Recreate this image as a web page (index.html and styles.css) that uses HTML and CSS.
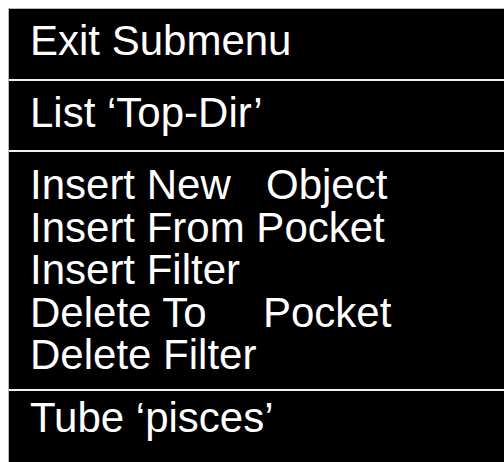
FILE: index.html
```html
<!DOCTYPE html>
<html lang="en">
<head>
<meta charset="utf-8">
<title>Submenu</title>
<link rel="stylesheet" href="styles.css">
</head>
<body>
  <div class="menu">
    <div class="group group-exit">
      <div class="item">Exit Submenu</div>
    </div>
    <div class="group group-list">
      <div class="item">List ‘Top-Dir’</div>
    </div>
    <div class="group group-edit">
      <div class="item"><span class="lead lead-new">Insert New</span>Object</div>
      <div class="item">Insert From Pocket</div>
      <div class="item">Insert Filter</div>
      <div class="item"><span class="lead lead-delete">Delete To</span>Pocket</div>
      <div class="item">Delete Filter</div>
    </div>
    <div class="group group-tube">
      <div class="item">Tube ‘pisces’</div>
    </div>
  </div>
</body>
</html>
```

FILE: styles.css
```css
html, body {
  margin: 0;
  padding: 0;
  background: #ffffff;
  height: 100%;
  overflow: hidden;
}

body {
  padding: 8px 0 0 8px;
  box-sizing: border-box;
}

.menu {
  height: 100%;
  background: #000000;
  border-left: 1px solid #b8b8b8;
  border-top: 1px solid #b8b8b8;
  color: #ffffff;
  font-family: "Liberation Sans", Arial, Helvetica, sans-serif;
  font-size: 42px;
  line-height: 42px;
  display: flex;
  flex-direction: column;
}

.group {
  padding-left: 21px;
}

.group + .group {
  border-top: 2px solid #f2f2f2;
}

.group-exit {
  padding-top: 11px;
  padding-bottom: 17px;
}

.group-list {
  padding-top: 11px;
  padding-bottom: 16px;
}

.group-edit {
  padding-top: 12px;
  padding-bottom: 12px;
  line-height: 42.5px;
}

.group-tube {
  padding-top: 6px;
  flex: 1;
}

.item {
  white-space: nowrap;
}

.lead {
  display: inline-block;
}

.lead-new {
  width: 236px;
}

.lead-delete {
  width: 233px;
}
```
